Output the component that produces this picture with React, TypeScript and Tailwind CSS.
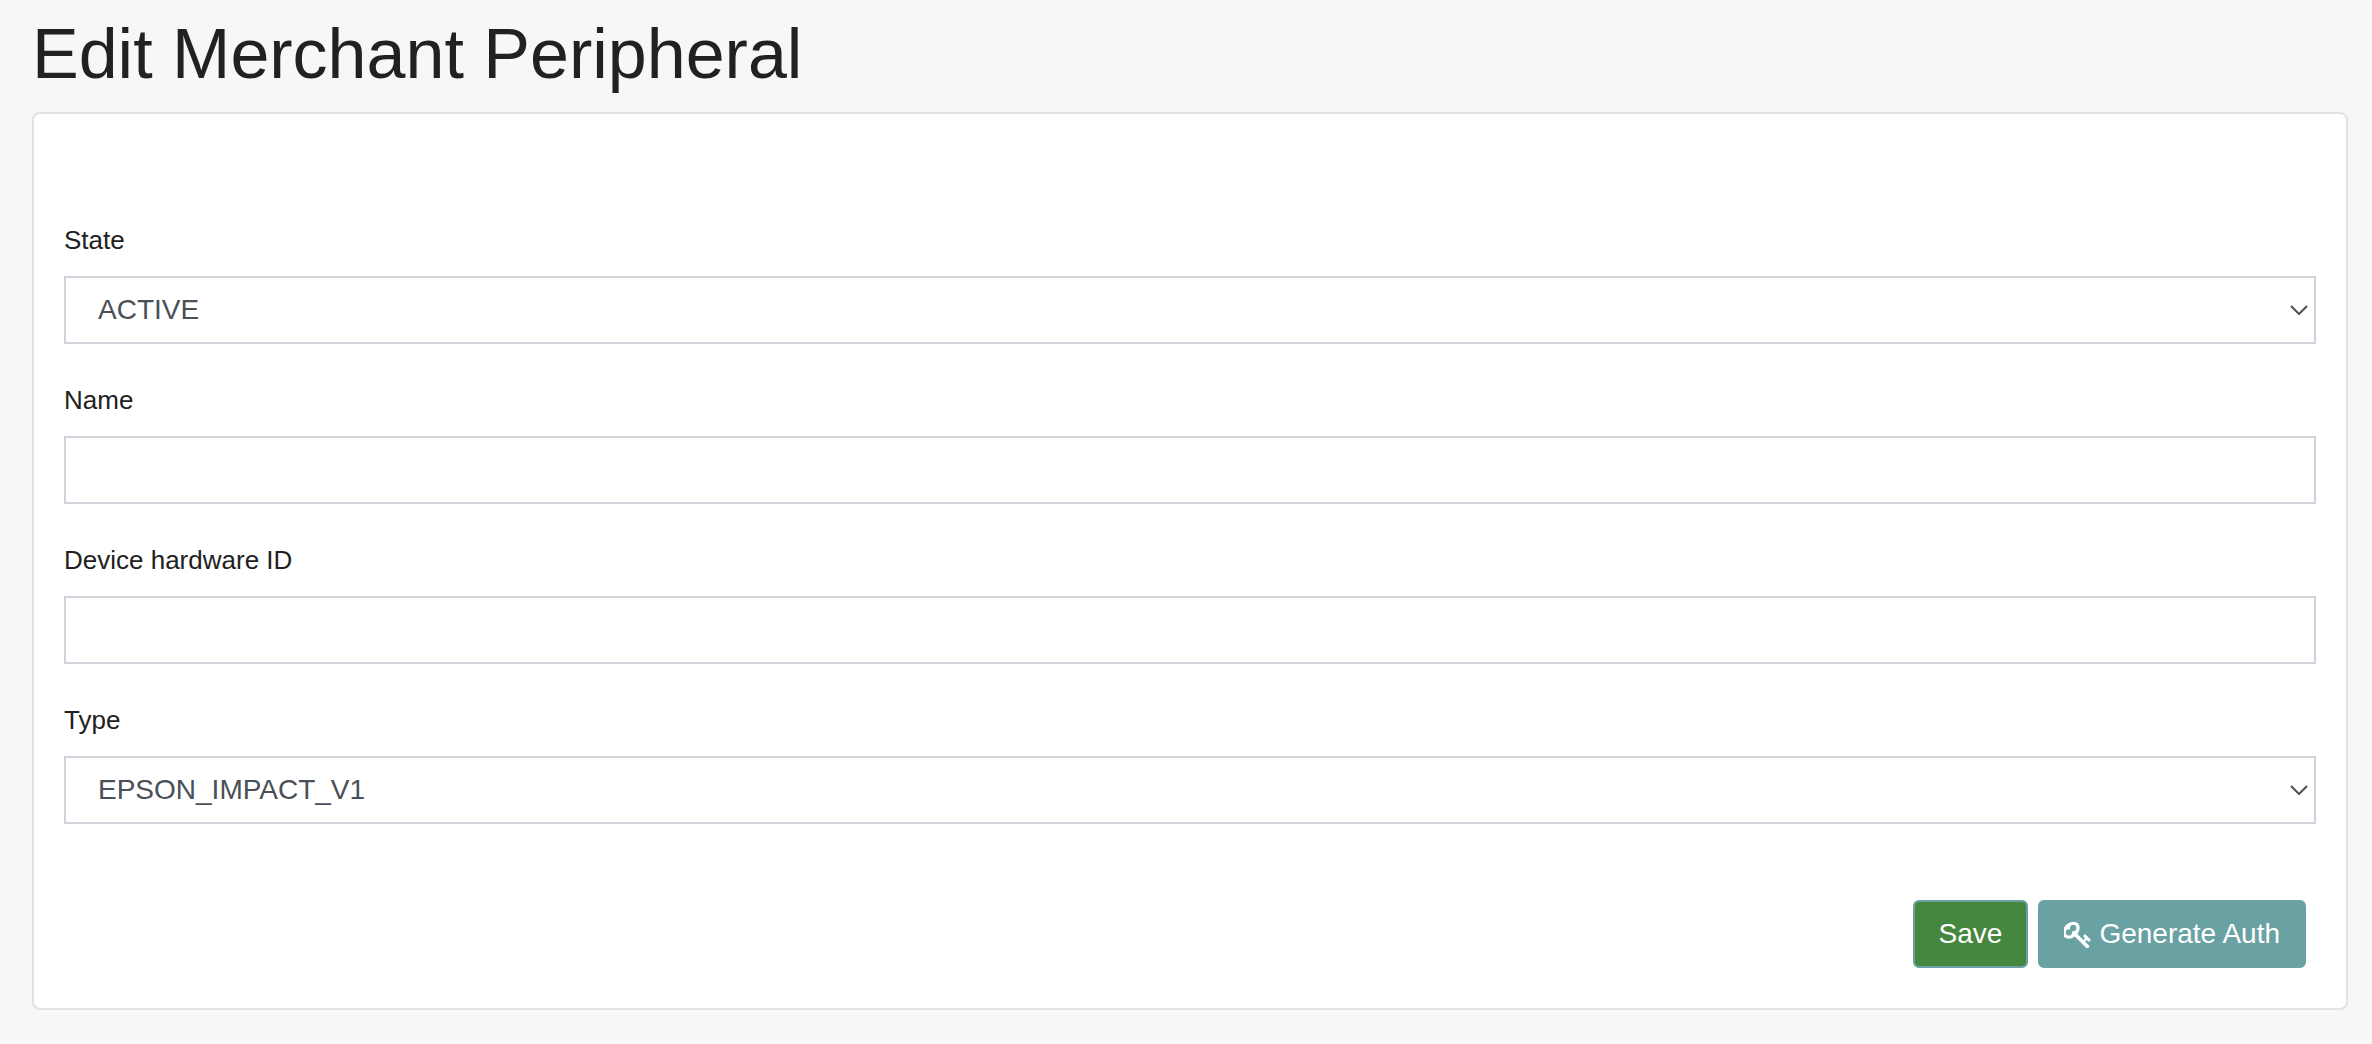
import { useId, useState } from "react";

const controlClass =
  "block h-17 w-full appearance-none border-2 border-[#ced4da] bg-white pl-8 pr-14 text-[28px] leading-10 text-[#495057] outline-none focus:border-[#6aa2a3]";

const labelClass = "mb-4 block text-[26px] leading-10 text-[#212121]";

function TextField({ label }: { label: string }) {
  const id = useId();
  const [value, setValue] = useState("");
  return (
    <div>
      <label htmlFor={id} className={labelClass}>
        {label}
      </label>
      <input
        id={id}
        type="text"
        value={value}
        onChange={(e) => setValue(e.target.value)}
        className={controlClass}
      />
    </div>
  );
}

function SelectField({ label, options }: { label: string; options: string[] }) {
  const id = useId();
  const [value, setValue] = useState(options[0]);
  return (
    <div>
      <label htmlFor={id} className={labelClass}>
        {label}
      </label>
      <div className="relative">
        <select
          id={id}
          value={value}
          onChange={(e) => setValue(e.target.value)}
          className={controlClass}
        >
          {options.map((option) => (
            <option key={option}>{option}</option>
          ))}
        </select>
        <svg
          viewBox="0 0 18 10"
          aria-hidden="true"
          className="pointer-events-none absolute inset-y-0 right-2 my-auto h-[10px] w-[18px]"
          fill="none"
          stroke="#495057"
          strokeWidth="2"
        >
          <path d="M1 1l8 8 8-8" />
        </svg>
      </div>
    </div>
  );
}

function KeyIcon() {
  return (
    <svg
      viewBox="90 90 1610 1610"
      aria-hidden="true"
      className="size-[27px]"
      fill="currentColor"
    >
      <path d="M832 512q0-80-56-136t-136-56-136 56-56 136q0 42 19 83-41-19-83-19-80 0-136 56t-56 136 56 136 136 56 136-56 56-136q0-42-19-83 41 19 83 19 80 0 136-56t56-136zm851 704q0 17-49 66t-66 49q-9 0-28.5-16t-36.5-33-38.5-40-24.5-26l-96 96 220 220q28 28 28 68 0 42-39 81t-81 39q-40 0-68-28l-671-671q-176 131-365 131-163 0-265.5-102.5t-102.5-265.5q0-160 95-313t248-248 313-95q163 0 265.5 102.5t102.5 265.5q0 189-131 365l355 355 96-96q-3-3-26-24.5t-40-38.5-33-36.5-16-28.5q0-17 49-66t66-49q13 0 23 10 6 6 46 44.5t82 79.5 86.5 86 73 78 28.5 41z" />
    </svg>
  );
}

const buttonClass =
  "flex h-17 items-center gap-2 rounded-md border-2 border-[#6aa2a3] px-6 text-[28px] leading-10 text-white";

export default function App() {
  return (
    <main className="min-h-screen bg-[#f7f7f7] pt-3 pr-6 pb-8 pl-8 font-['Liberation_Sans',Arial,sans-serif]">
      <h1 className="mb-4 text-[70px] leading-[84px] text-[#212121]">Edit Merchant Peripheral</h1>
      <form
        onSubmit={(e) => e.preventDefault()}
        className="rounded-lg border-2 border-[#e2e2e2] bg-white px-[30px] pt-[106px] pb-10"
      >
        <div className="flex flex-col gap-9">
          <SelectField label="State" options={["ACTIVE", "INACTIVE"]} />
          <TextField label="Name" />
          <TextField label="Device hardware ID" />
          <SelectField label="Type" options={["EPSON_IMPACT_V1"]} />
        </div>
        <div className="mt-19 mr-[10px] flex justify-end gap-[10px]">
          <button type="submit" className={`${buttonClass} bg-[#45873f]`}>
            Save
          </button>
          <button type="button" className={`${buttonClass} bg-[#6aa2a3]`}>
            <KeyIcon />
            Generate Auth
          </button>
        </div>
      </form>
    </main>
  );
}
